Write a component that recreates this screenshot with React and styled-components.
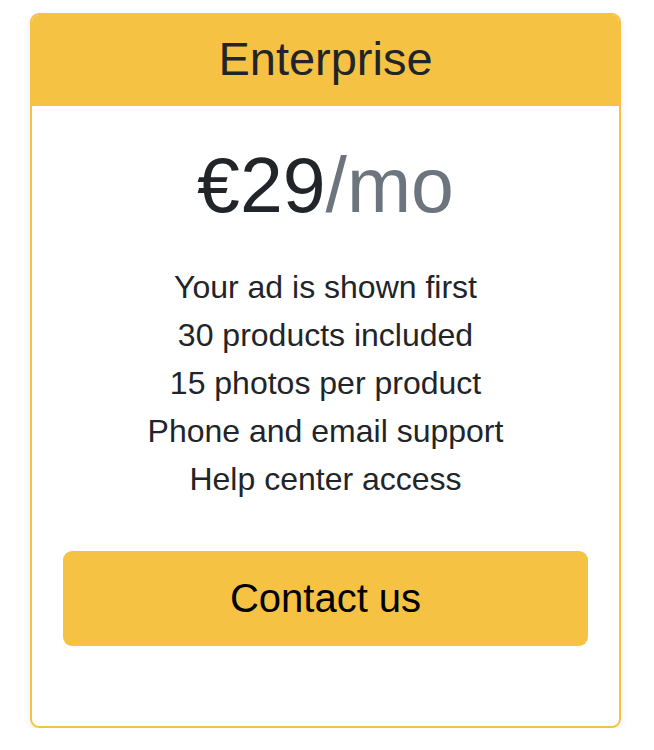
import React from 'react';
import styled, { createGlobalStyle } from 'styled-components';

const PricingCard = () => {
    return (
        <>
            <GlobalStyle />
            <Page>
                <Card>
                    <Header>
                        <Title>Enterprise</Title>
                    </Header>
                    <Body>
                        <Price>
                            €29<Period>/mo</Period>
                        </Price>
                        <Features>
                            <li>Your ad is shown first</li>
                            <li>30 products included</li>
                            <li>15 photos per product</li>
                            <li>Phone and email support</li>
                            <li>Help center access</li>
                        </Features>
                        <Button type="button">Contact us</Button>
                    </Body>
                </Card>
            </Page>
        </>
    );
};

export default PricingCard;


const GlobalStyle = createGlobalStyle`
    body {
        margin: 0;
        background: #fff;
        font-family: "Liberation Sans", Arial, sans-serif;
        color: #212529;
    }
`;
const Page = styled.div`
    padding: 13px 33px 0 30px;
`;
const Card = styled.div`
    width: 591px;
    height: 715px;
    box-sizing: border-box;
    border: 2px solid #f5c244;
    border-radius: 9px;
    overflow: hidden;
    background: #fff;
    box-shadow: 0 4px 8px rgba(0, 0, 0, 0.07);
    display: flex;
    flex-direction: column;
`;
const Header = styled.div`
    background: #f5c244;
    padding: 15px 32px 18px;
    text-align: center;
`;
const Title = styled.h4`
    margin: 0;
    font-size: 47px;
    font-weight: 400;
    line-height: 57.6px;
    color: #212529;
`;
const Body = styled.div`
    padding: 31px 31px 0;
    text-align: center;
`;
const Price = styled.h1`
    margin: 0 0 30px;
    font-size: 77px;
    font-weight: 400;
    line-height: 96px;
    color: #212529;
`;
const Period = styled.small`
    font-size: inherit;
    color: #6c757d;
`;
const Features = styled.ul`
    list-style: none;
    margin: 0 0 48px;
    padding: 0;
    font-size: 32px;
    line-height: 48px;
    color: #212529;
`;
const Button = styled.button`
    display: block;
    width: 100%;
    height: 95px;
    border: none;
    border-radius: 9px;
    background: #f5c244;
    color: #000;
    font-family: "Liberation Sans", Arial, sans-serif;
    font-size: 40px;
    cursor: pointer;
`;
